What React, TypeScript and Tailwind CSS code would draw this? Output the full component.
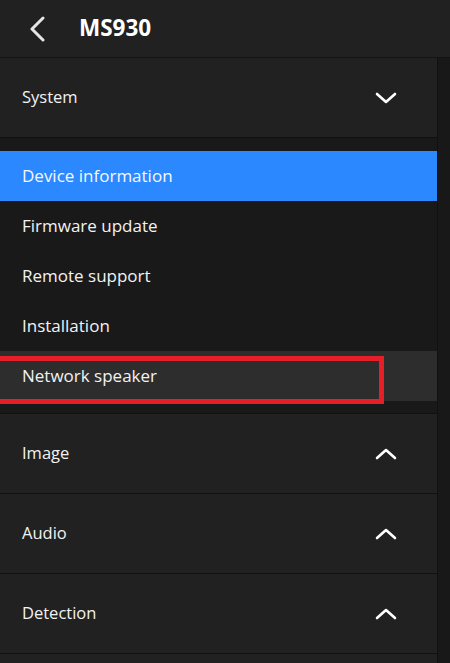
import React from "react";

const font = { fontFamily: '"Open Sans", "Noto Sans", sans-serif' };

function ChevronDown() {
  return (
    <svg width="22" height="12" viewBox="0 0 22 12" fill="none">
      <path d="M2 2 L11 10 L20 2" stroke="white" strokeWidth="2.6" strokeLinecap="round" strokeLinejoin="round" />
    </svg>
  );
}
function ChevronUp() {
  return (
    <svg width="22" height="12" viewBox="0 0 22 12" fill="none">
      <path d="M2 10 L11 2 L20 10" stroke="white" strokeWidth="2.6" strokeLinecap="round" strokeLinejoin="round" />
    </svg>
  );
}

function Section({ title, open }: { title: string; open?: boolean }) {
  return (
    <div className="h-[80px] flex items-center justify-between pl-[22px] pr-[40px] bg-[#212121] border-b border-[#111111]">
      <span className="text-[16.5px] text-[#f2f2f2]">{title}</span>
      {open ? <ChevronDown /> : <ChevronUp />}
    </div>
  );
}

export default function App() {
  const items = ["Device information", "Firmware update", "Remote support", "Installation", "Network speaker"];
  return (
    <div className="w-[450px] h-[663px] bg-[#212121] flex flex-col overflow-hidden" style={font}>
      <div className="h-[58px] shrink-0 flex items-center border-b border-[#131313] bg-[#212121]">
        <svg className="ml-[28px]" width="18" height="26" viewBox="0 0 18 26" fill="none">
          <path d="M15 2 L4 13 L15 24" stroke="#e6e6e6" strokeWidth="3" strokeLinecap="round" strokeLinejoin="round" />
        </svg>
        <span className="ml-[33px] text-[22.5px] font-bold text-white leading-none">MS930</span>
      </div>
      <div className="flex flex-1 min-h-0">
        <div className="w-[438px] flex flex-col border-r border-[#111111]">
          <Section title="System" open />
          <div className="bg-[#191919] pt-[13px] pb-[12px] border-b border-[#111111]">
            {items.map((it, i) => (
              <div
                key={it}
                className={
                  "relative h-[50px] flex items-center pl-[22px] text-[17px] " +
                  (i === 0 ? "bg-[#2b88ff] text-[#f4f8ff]" : i === 4 ? "bg-[#2d2d2d] text-[#f2f2f2]" : "text-[#f2f2f2]")
                }
              >
                {it}
                {i === 4 && (
                  <div className="absolute left-[-10px] top-[5px] w-[394px] h-[48px] border-[5px] border-[#e51f28]" />
                )}
              </div>
            ))}
          </div>
          <Section title="Image" />
          <Section title="Audio" />
          <Section title="Detection" />
          <div className="flex-1 bg-[#212121]" />
        </div>
        <div className="flex-1 bg-[#181818]" />
      </div>
    </div>
  );
}
